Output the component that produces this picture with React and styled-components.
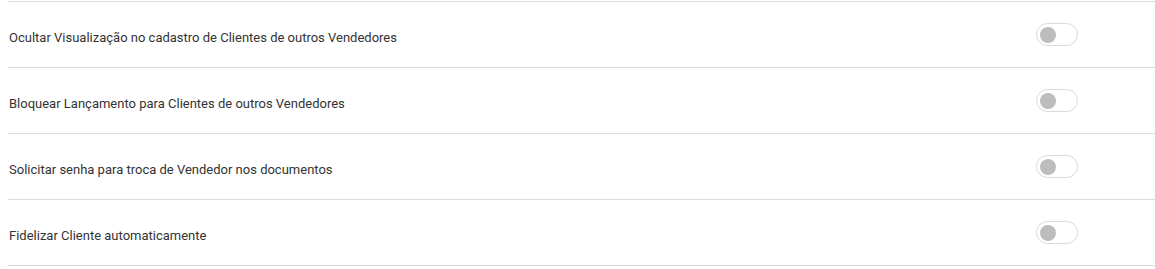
import React from 'react';
import styled, { createGlobalStyle } from 'styled-components';

const GlobalStyle = createGlobalStyle`
  body {
    margin: 0;
    background: #ffffff;
    font-family: Roboto, "Liberation Sans", sans-serif;
  }
`

const List = styled.section`
  padding: 1px 0 0 8px;
`

const Row = styled.div`
  display: flex;
  align-items: center;
  justify-content: space-between;
  height: 65px;
  border-top: 1px solid #dcdcdc;
  &:last-child {
    border-bottom: 1px solid #dcdcdc;
  }
`

const Label = styled.span`
  font-size: 13px;
  color: #333333;
  padding: 5px 0 0 1px;
`

const Switch = styled.button`
  position: relative;
  width: 42px;
  height: 23px;
  margin: 0 77px 0 0;
  padding: 0;
  border: 1px solid #d5dbe1;
  border-radius: 12px;
  background: #ffffff;
  cursor: pointer;

  &::after {
    content: '';
    position: absolute;
    top: 3px;
    left: ${props => props.on ? '22px' : '3px'};
    width: 16px;
    height: 16px;
    border-radius: 50%;
    background: #bdbdbd;
  }
`

const options = [
  'Ocultar Visualização no cadastro de Clientes de outros Vendedores',
  'Bloquear Lançamento para Clientes de outros Vendedores',
  'Solicitar senha para troca de Vendedor nos documentos',
  'Fidelizar Cliente automaticamente',
];

const App = () => {
  return (
    <>
      <GlobalStyle />
      <List>
        {options.map(text => (
          <Row key={text}>
            <Label>{text}</Label>
            <Switch aria-label={text} />
          </Row>
        ))}
      </List>
    </>
  )
};

export default App;
